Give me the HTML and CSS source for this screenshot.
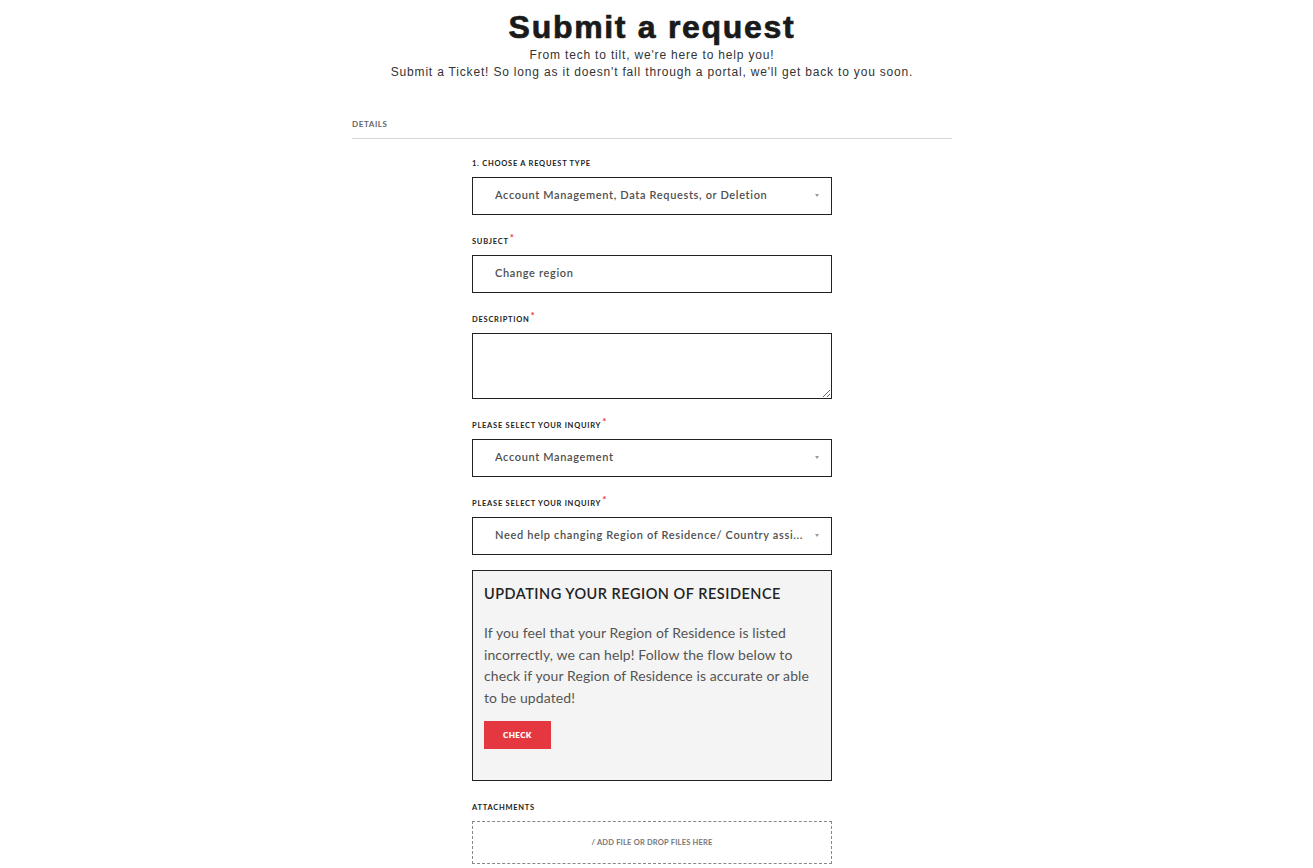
FILE: index.html
```html
<!DOCTYPE html>
<html lang="en">
<head>
<meta charset="utf-8">
<title>Submit a request</title>
<link rel="stylesheet" href="styles.css">
</head>
<body>
<header class="hero">
  <h1 class="title">Submit a request</h1>
  <p class="subtitle">From tech to tilt, we're here to help you!</p>
  <p class="subtitle">Submit a Ticket! So long as it doesn't fall through a portal, we'll get back to you soon.</p>
</header>
<main class="container">
  <div class="section-head">DETAILS</div>
  <form class="form">
    <div class="group">
      <label class="label">1. CHOOSE A REQUEST TYPE</label>
      <div class="field select"><span class="value">Account Management, Data Requests, or Deletion</span><span class="caret"></span></div>
    </div>
    <div class="group">
      <label class="label">SUBJECT<span class="req">*</span></label>
      <div class="field"><span class="value">Change region</span></div>
    </div>
    <div class="group">
      <label class="label">DESCRIPTION<span class="req">*</span></label>
      <textarea class="textarea"></textarea>
    </div>
    <div class="group">
      <label class="label">PLEASE SELECT YOUR INQUIRY<span class="req">*</span></label>
      <div class="field select"><span class="value">Account Management</span><span class="caret"></span></div>
    </div>
    <div class="group small-gap">
      <label class="label">PLEASE SELECT YOUR INQUIRY<span class="req">*</span></label>
      <div class="field select"><span class="value">Need help changing Region of Residence/ Country assi...</span><span class="caret"></span></div>
    </div>
    <div class="group">
      <div class="info">
        <h2 class="info-title">UPDATING YOUR REGION OF RESIDENCE</h2>
        <p class="info-text">If you feel that your Region of Residence is listed incorrectly, we can help! Follow the flow below to check if your Region of Residence is accurate or able to be updated!</p>
        <button type="button" class="btn">CHECK</button>
      </div>
    </div>
    <div class="group">
      <label class="label">ATTACHMENTS</label>
      <div class="dropzone">/ ADD FILE OR DROP FILES HERE</div>
    </div>
  </form>
</main>
</body>
</html>
```

FILE: styles.css
```css
* { box-sizing: border-box; }
html, body { margin: 0; padding: 0; background: #fff; }
body { font-family: "Lato", "Liberation Sans", sans-serif; color: #222; padding-right: 9px; }

.hero { text-align: center; padding-top: 9px; }
.title {
  margin: 0;
  font-family: "Liberation Sans", Arial, sans-serif;
  font-size: 32px;
  line-height: 36px;
  font-weight: 700;
  letter-spacing: 1.7px;
  color: #1a1a1a;
  -webkit-text-stroke: 0.7px #1a1a1a;
}
.subtitle {
  margin: 0;
  font-family: "Liberation Sans", Arial, sans-serif;
  font-size: 12px;
  line-height: 17px;
  letter-spacing: 0.82px;
  color: #333;
}
.subtitle:first-of-type { margin-top: 2px; }

.container { width: 600px; margin: 37px auto 0; }
.section-head {
  font-size: 8px;
  font-weight: 700;
  letter-spacing: 0.6px;
  line-height: 12px;
  height: 20px;
  color: #666;
  border-bottom: 1px solid #d6d6d6;
  box-sizing: content-box;
}
.form { width: 360px; margin: 18px auto 0; }
.group { margin-bottom: 20px; }
.group.small-gap { margin-bottom: 15px; }
.label {
  display: block;
  height: 13px;
  padding-top: 1px;
  font-size: 7.5px;
  font-weight: 700;
  letter-spacing: 0.75px;
  line-height: 12px;
  color: #222;
  margin-bottom: 7px;
  white-space: nowrap;
}
.req {
  color: #e5373f;
  font-size: 10px;
  line-height: 0;
  vertical-align: 3px;
  margin-left: 1px;
}

.field {
  height: 38px;
  border: 1px solid #222;
  display: flex;
  align-items: center;
  padding: 0 12px 3px 22px;
  background: #fff;
}
.value {
  flex: 1;
  font-size: 11px;
  letter-spacing: 0.65px;
  font-weight: 600;
  color: #4f4f4f;
  white-space: nowrap;
  overflow: hidden;
}
.caret {
  width: 0; height: 0;
  border-left: 2.5px solid transparent;
  border-right: 2.5px solid transparent;
  border-top: 3px solid #999;
  margin-left: 8px;
  margin-top: 2px;
}
.textarea {
  display: block;
  width: 360px;
  height: 66px;
  border: 1px solid #222;
  border-radius: 0;
  margin: 0;
  padding: 8px;
  font: inherit;
  resize: vertical;
  outline: none;
}

.info {
  background: #f4f4f4;
  border: 1px solid #222;
  padding: 13px 11px 31px;
}
.info-title {
  margin: 0;
  font-size: 14.5px;
  line-height: 20px;
  font-weight: 600;
  letter-spacing: 0.5px;
  color: #222;
}
.info-text {
  margin: 18px 0 12px;
  font-size: 14px;
  line-height: 21.7px;
  color: #555;
  letter-spacing: 0.1px;
}
.btn {
  display: block;
  width: 67px;
  height: 28px;
  border: 0;
  border-radius: 0;
  background: #e5373f;
  color: #fff;
  font-family: "Lato", "Liberation Sans", sans-serif;
  font-size: 8px;
  font-weight: 800;
  letter-spacing: 0.4px;
  padding: 0;
}
.dropzone {
  height: 43px;
  border: 1px dashed #888;
  display: flex;
  align-items: center;
  justify-content: center;
  font-size: 7.5px;
  font-weight: 700;
  letter-spacing: 0.2px;
  color: #777;
}
```
